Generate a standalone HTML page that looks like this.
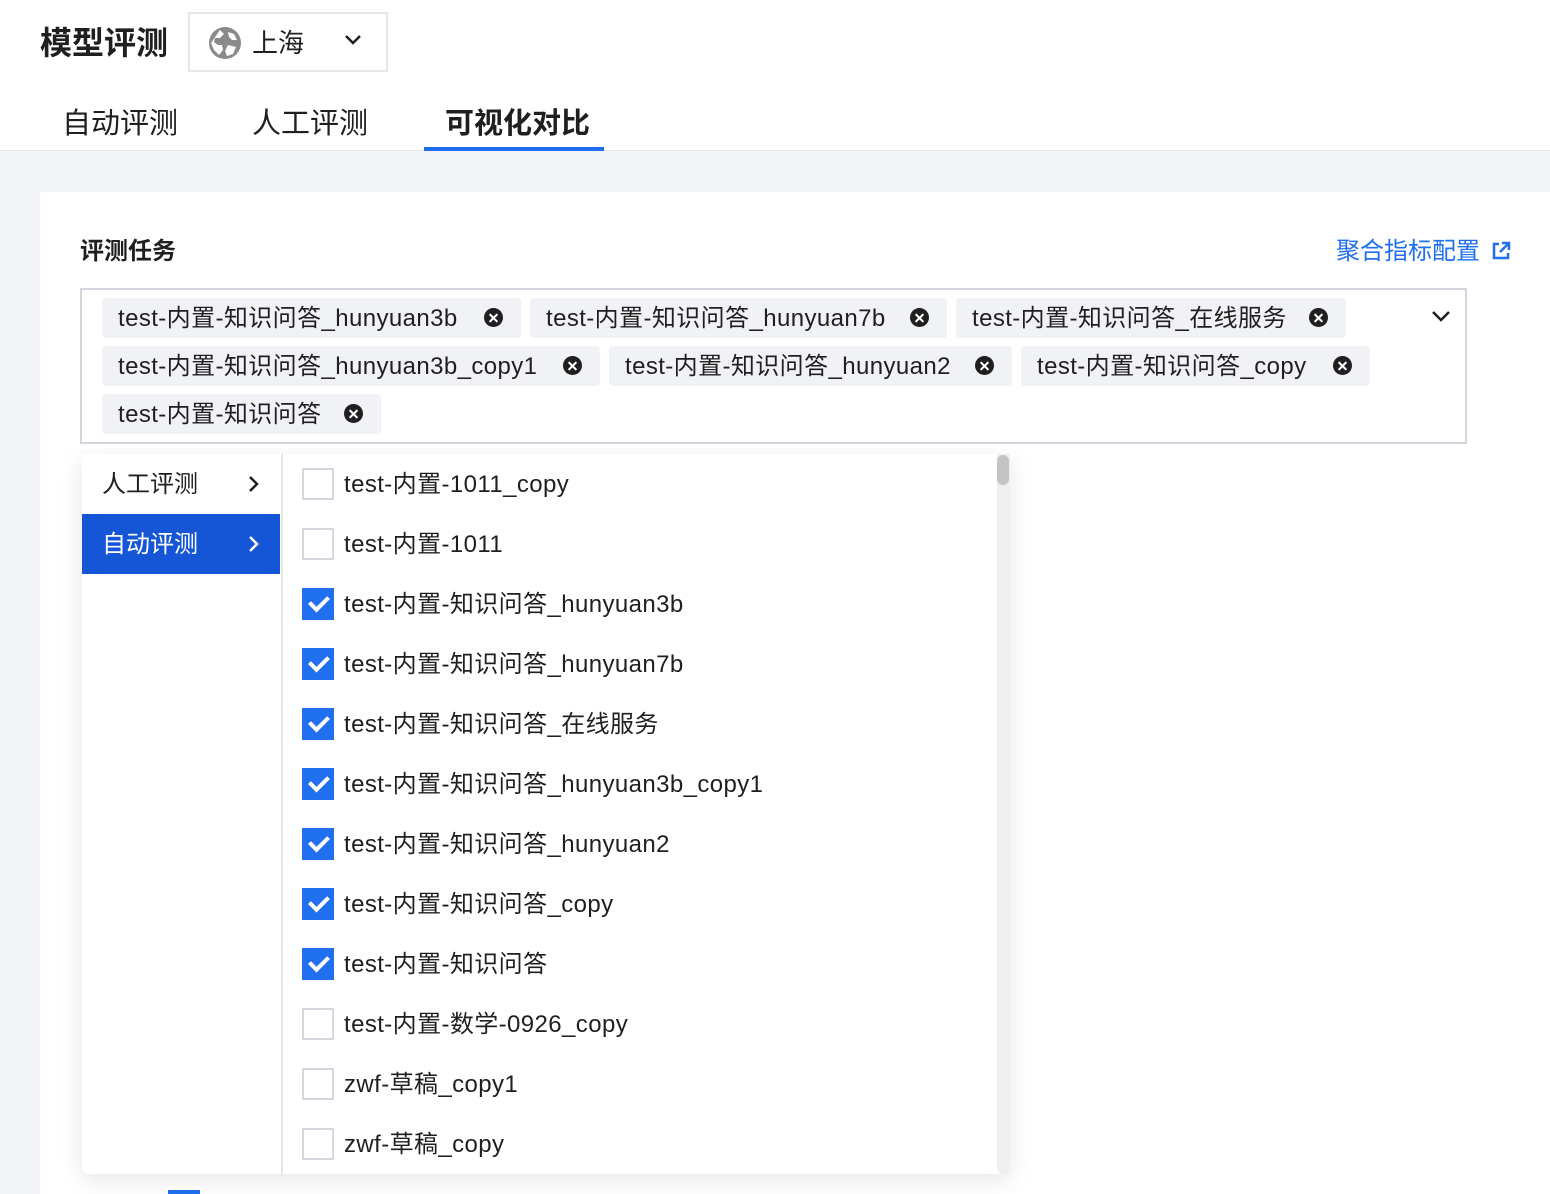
<!DOCTYPE html>
<html><head><meta charset="utf-8"><style>
*{margin:0;padding:0;box-sizing:border-box}
body{width:1550px;height:1194px;overflow:hidden;background:#f3f4f7;font-family:"Liberation Sans","Noto Sans CJK SC",sans-serif;color:#1f1f1f;position:relative}
.a{position:absolute}
.hdr{left:0;top:0;width:1550px;height:151px;background:#fff;border-bottom:1px solid #e3e5ea}
.tag{position:absolute;height:40px;background:#f1f2f5;border-radius:4px;font-size:24px;line-height:42px;padding-left:16px;white-space:nowrap;color:#1f1f1f;letter-spacing:0.4px}
.tag .x{position:absolute;right:18px;top:10px;width:19px;height:19px;border-radius:50%;background:#1f1f1f}
.tag .x:before,.tag .x:after{content:"";position:absolute;left:4px;top:8.5px;width:11px;height:2px;background:#fff;transform:rotate(45deg)}
.tag .x:after{transform:rotate(-45deg)}
.row{position:absolute;left:302px;height:60px;font-size:24px;line-height:62px;white-space:nowrap;letter-spacing:0.4px}
.cb{position:absolute;left:0;top:14px;width:32px;height:32px;border:2px solid #d4d7de;background:#fff}
.cb.on{background:#1f6fef;border-color:#1f6fef}
.cb.on:after{content:"";position:absolute;left:9px;top:2px;width:8px;height:15px;border:solid #fff;border-width:0 4px 4px 0;transform:rotate(45deg)}
.row span{position:absolute;left:42px}
</style></head><body>
<div class="a hdr"></div>
<div class="a" style="left:40px;top:23px;font-size:32px;font-weight:bold;line-height:40px">模型评测</div>
<div class="a" style="left:188px;top:12px;width:200px;height:60px;border:2px solid #e6e7eb;background:#fff"></div>
<svg class="a" style="left:208px;top:26px" width="34" height="34" viewBox="0 0 34 34"><circle cx="17" cy="17" r="16" fill="#8a8a8a"/><path d="M12 4 L16 8 L12 12 L7 12 L6 16 L10 19 L14 19 L15 24 L11 29 L6 24 L3 17 Z M20 6 L26 8 L29 14 L24 14 L21 11 Z M20 19 L28 21 L25 28 L19 30 L17 25 Z" fill="#fff"/></svg>
<div class="a" style="left:252px;top:25px;font-size:26px;line-height:36px">上海</div>
<svg class="a" style="left:343px;top:33px" width="20" height="14" viewBox="0 0 20 14"><path d="M3 3 L10 10 L17 3" stroke="#1f1f1f" stroke-width="2.5" fill="none"/></svg>
<div class="a" style="left:62px;top:105px;font-size:29px;line-height:38px">自动评测</div>
<div class="a" style="left:252px;top:105px;font-size:29px;line-height:38px">人工评测</div>
<div class="a" style="left:445px;top:105px;font-size:29px;line-height:38px;font-weight:bold">可视化对比</div>
<div class="a" style="left:424px;top:147px;width:180px;height:4px;background:#1f6fef"></div>

<div class="a" style="left:40px;top:192px;width:1510px;height:1002px;background:#fff"></div>
<div class="a" style="left:80px;top:235px;font-size:24px;font-weight:bold;line-height:34px">评测任务</div>
<div class="a" style="left:1336px;top:235px;font-size:24px;color:#1f6fef;line-height:34px">聚合指标配置</div>
<svg class="a" style="left:1490px;top:240px" width="22" height="22" viewBox="0 0 22 22"><path d="M9 4 H4 V18 H18 V13" stroke="#1f6fef" stroke-width="2.5" fill="none"/><path d="M12 3 H19 V10 M19 3 L10 12" stroke="#1f6fef" stroke-width="2.5" fill="none"/></svg>

<div class="a" style="left:80px;top:288px;width:1387px;height:156px;border:2px solid #d2d5dc;background:#fff"></div>
<svg class="a" style="left:1430px;top:308px" width="22" height="16" viewBox="0 0 22 16"><path d="M3 4 L11 12 L19 4" stroke="#1f1f1f" stroke-width="2.5" fill="none"/></svg>
<div class="tag" style="left:102px;top:298px;width:419px">test-内置-知识问答_hunyuan3b<i class="x"></i></div>
<div class="tag" style="left:530px;top:298px;width:417px">test-内置-知识问答_hunyuan7b<i class="x"></i></div>
<div class="tag" style="left:956px;top:298px;width:390px">test-内置-知识问答_在线服务<i class="x"></i></div>
<div class="tag" style="left:102px;top:346px;width:498px">test-内置-知识问答_hunyuan3b_copy1<i class="x"></i></div>
<div class="tag" style="left:609px;top:346px;width:403px">test-内置-知识问答_hunyuan2<i class="x"></i></div>
<div class="tag" style="left:1021px;top:346px;width:349px">test-内置-知识问答_copy<i class="x"></i></div>
<div class="tag" style="left:102px;top:394px;width:279px">test-内置-知识问答<i class="x"></i></div>

<div class="a" style="left:168px;top:1190px;width:32px;height:4px;background:#1f6fef"></div>

<div class="a" style="left:82px;top:454px;width:928px;height:720px;background:#fff;box-shadow:0 6px 24px rgba(0,0,0,0.10);border-radius:0 0 6px 6px;overflow:hidden">
<div class="a" style="left:199px;top:0;width:2px;height:720px;background:#e6e7eb"></div>
<div class="a" style="left:0;top:0;width:198px;height:60px;font-size:24px;line-height:62px;padding-left:20px">人工评测</div>
<svg class="a" style="left:164px;top:20px" width="16" height="20" viewBox="0 0 16 20"><path d="M4 3 L11 10 L4 17" stroke="#1f1f1f" stroke-width="2.5" fill="none"/></svg>
<div class="a" style="left:0;top:60px;width:198px;height:60px;background:#1556d6;color:#fff;font-size:24px;line-height:62px;padding-left:20px">自动评测</div>
<svg class="a" style="left:164px;top:80px" width="16" height="20" viewBox="0 0 16 20"><path d="M4 3 L11 10 L4 17" stroke="#fff" stroke-width="2.5" fill="none"/></svg>
<div class="a" style="left:915px;top:0;width:13px;height:720px;background:#efeff1;border-radius:0 0 6px 6px"></div>
<div class="a" style="left:915px;top:1px;width:12px;height:30px;background:#c4c4c6;border-radius:6px"></div>
</div>
<div class="row" style="top:454px"><i class="cb"></i><span>test-内置-1011_copy</span></div>
<div class="row" style="top:514px"><i class="cb"></i><span>test-内置-1011</span></div>
<div class="row" style="top:574px"><i class="cb on"></i><span>test-内置-知识问答_hunyuan3b</span></div>
<div class="row" style="top:634px"><i class="cb on"></i><span>test-内置-知识问答_hunyuan7b</span></div>
<div class="row" style="top:694px"><i class="cb on"></i><span>test-内置-知识问答_在线服务</span></div>
<div class="row" style="top:754px"><i class="cb on"></i><span>test-内置-知识问答_hunyuan3b_copy1</span></div>
<div class="row" style="top:814px"><i class="cb on"></i><span>test-内置-知识问答_hunyuan2</span></div>
<div class="row" style="top:874px"><i class="cb on"></i><span>test-内置-知识问答_copy</span></div>
<div class="row" style="top:934px"><i class="cb on"></i><span>test-内置-知识问答</span></div>
<div class="row" style="top:994px"><i class="cb"></i><span>test-内置-数学-0926_copy</span></div>
<div class="row" style="top:1054px"><i class="cb"></i><span>zwf-草稿_copy1</span></div>
<div class="row" style="top:1114px"><i class="cb"></i><span>zwf-草稿_copy</span></div>
</body></html>
